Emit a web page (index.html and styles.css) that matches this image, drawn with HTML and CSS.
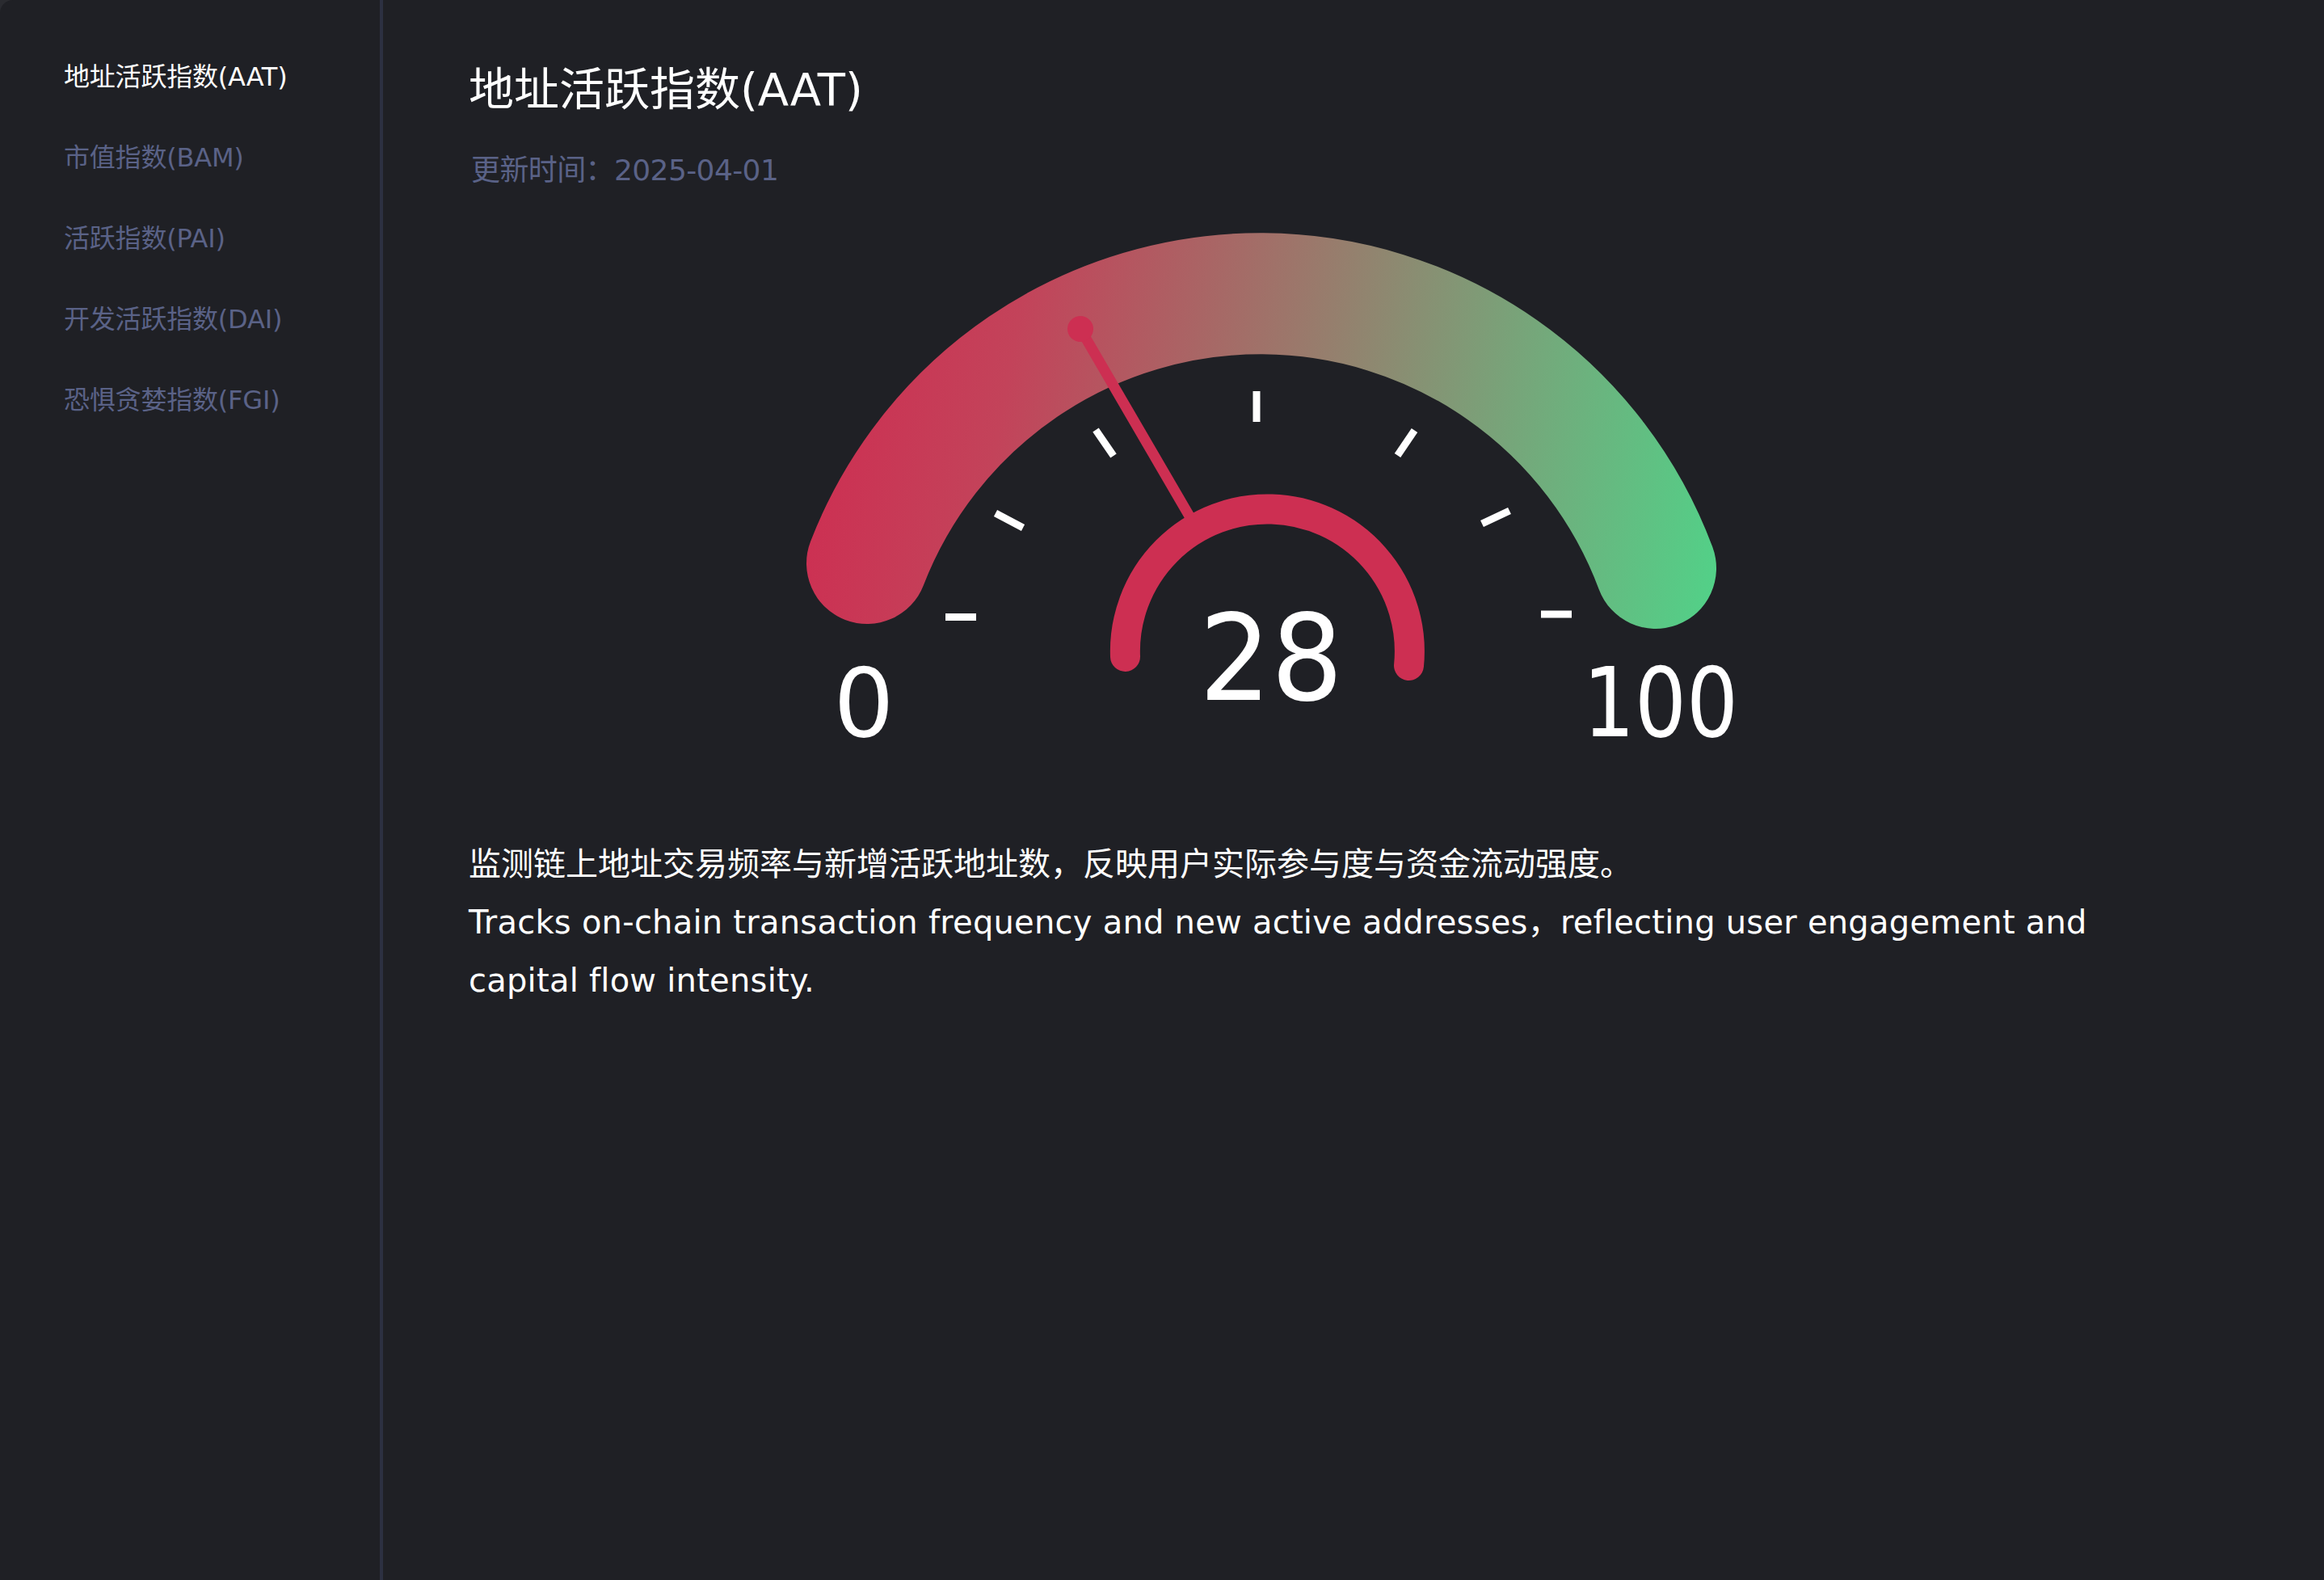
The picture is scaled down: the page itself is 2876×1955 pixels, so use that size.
FILE: index.html
```html
<!DOCTYPE html>
<html lang="zh-CN">
<head>
<meta charset="utf-8">
<title>地址活跃指数(AAT)</title>
<link rel="stylesheet" href="styles.css">
</head>
<body>
<div class="app">
  <aside class="sidebar">
    <ul class="nav">
      <li class="nav-item active">地址活跃指数(AAT)</li>
      <li class="nav-item">市值指数(BAM)</li>
      <li class="nav-item">活跃指数(PAI)</li>
      <li class="nav-item">开发活跃指数(DAI)</li>
      <li class="nav-item">恐惧贪婪指数(FGI)</li>
    </ul>
  </aside>
  <main class="main">
    <h1 class="title">地址活跃指数(AAT)</h1>
    <div class="updated">更新时间：2025-04-01</div>
    <svg class="gauge" viewBox="960 270 1230 670" xmlns="http://www.w3.org/2000/svg">
      <defs>
        <linearGradient id="ringGrad" gradientUnits="userSpaceOnUse" x1="1000" y1="560" x2="2120" y2="760">
          <stop offset="0" stop-color="#cd2f52"/>
          <stop offset="0.2" stop-color="#c3435a"/>
          <stop offset="0.5" stop-color="#9b786b"/>
          <stop offset="0.75" stop-color="#76a67a"/>
          <stop offset="1" stop-color="#52d188"/>
        </linearGradient>
      </defs>
      <path class="ring" d="M 1073 697 A 522 522 0 0 1 2049 703" stroke="url(#ringGrad)"/>
      <g class="ticks">
        <line x1="1170" y1="763.5" x2="1208" y2="763.5"/>
        <line x1="1232" y1="635" x2="1266" y2="653"/>
        <line x1="1356" y1="532" x2="1378" y2="564"/>
        <line x1="1555" y1="484" x2="1555" y2="522"/>
        <line x1="1729.5" y1="563.5" x2="1750.5" y2="532.5"/>
        <line x1="1834" y1="648" x2="1868" y2="632"/>
        <line x1="1907" y1="760" x2="1945" y2="760"/>
      </g>
      <line class="needle" x1="1337" y1="407" x2="1485" y2="661"/>
      <circle class="needle-tip" cx="1337" cy="407" r="16"/>
      <path class="hub" d="M 1392.5 812.5 A 176 176 0 1 1 1743.5 823.5"/>
      <text class="gauge-num" x="1069" y="911" font-size="118" text-anchor="middle">0</text>
      <text class="gauge-num" x="1573" y="866" font-size="148" text-anchor="middle" textLength="178" lengthAdjust="spacingAndGlyphs">28</text>
      <text class="gauge-num" x="2055" y="911" font-size="119" text-anchor="middle" textLength="192" lengthAdjust="spacingAndGlyphs">100</text>
    </svg>
    <p class="desc">监测链上地址交易频率与新增活跃地址数，反映用户实际参与度与资金流动强度。</p>
    <p class="desc desc-en">Tracks on-chain transaction frequency and new active addresses，reflecting user engagement and capital flow intensity.</p>
  </main>
</div>
</body>
</html>
```

FILE: styles.css
```css
html, body {
  margin: 0;
  padding: 0;
  background: #2a2b30;
}

body {
  font-family: "DejaVu Sans", "Noto Sans CJK SC", sans-serif;
  color: #ffffff;
}

.app {
  display: flex;
  height: 1955px;
  background: #1f2025;
  border-radius: 16px 0 0 0;
  overflow: hidden;
}

.sidebar {
  width: 470px;
  flex: none;
  border-right: 4px solid #2c3041;
  padding-top: 45px;
}

.nav {
  list-style: none;
  margin: 0;
  padding: 0;
}

.nav-item {
  height: 100px;
  line-height: 100px;
  padding-left: 79px;
  font-size: 32px;
  letter-spacing: -0.2px;
  color: #5a6287;
  white-space: nowrap;
}

.nav-item.active {
  color: #ffffff;
}

.main {
  flex: 1;
  padding: 69px 0 0 106px;
}

.title {
  margin: 0;
  font-size: 56px;
  line-height: 84px;
  font-weight: 400;
  color: #ffffff;
}

.updated {
  margin-top: 31px;
  padding-left: 3px;
  font-size: 36px;
  line-height: 54px;
  letter-spacing: -0.6px;
  color: #5a6287;
}

.gauge {
  display: block;
  margin: 32px 0 0 380px;
  width: 1230px;
  height: 670px;
}

.ring {
  fill: none;
  stroke-width: 150;
  stroke-linecap: round;
}

.ticks line {
  stroke: #ffffff;
  stroke-width: 9;
}

.needle {
  stroke: #cd2f52;
  stroke-width: 13;
}

.needle-tip {
  fill: #cd2f52;
}

.hub {
  fill: none;
  stroke: #cd2f52;
  stroke-width: 37;
  stroke-linecap: round;
}

.gauge-num {
  fill: #ffffff;
  font-family: "DejaVu Sans", sans-serif;
}

.desc {
  margin: 93px 0 0;
  font-size: 40px;
  line-height: 72px;
  max-width: 2080px;
  color: #ffffff;
}

.desc-en {
  margin-top: 0;
  letter-spacing: 0.24px;
}
```
